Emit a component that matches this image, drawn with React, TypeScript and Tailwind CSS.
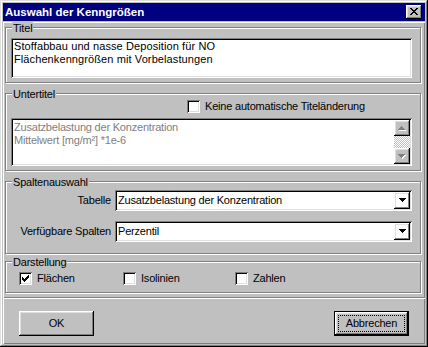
import React from 'react';

const raised = 'shadow-[inset_-1px_-1px_#000,inset_1px_1px_#fff,inset_-2px_-2px_#808080,inset_2px_2px_#dfdfdf]';
const sunken = 'shadow-[inset_1px_1px_#808080,inset_-1px_-1px_#fff,inset_2px_2px_#000,inset_-2px_-2px_#dfdfdf]';
const panel = 'shadow-[inset_1px_1px_#fff,inset_-1px_-1px_#808080]';

function GroupBox({ label, className = '', children }: { label: string; className?: string; children?: React.ReactNode }) {
  return (
    <div className={`relative w-[416px] border border-[#808080] shadow-[inset_1px_1px_#fff,1px_1px_#fff] ${className}`}>
      <span className="absolute left-[6px] -top-[6px] bg-[#c0c0c0] px-px leading-[13px]">{label}</span>
      {children}
    </div>
  );
}

function Check({ checked = false }: { checked?: boolean }) {
  return (
    <span className={`flex h-[13px] w-[13px] shrink-0 items-start bg-white pl-[3px] pt-[3px] ${sunken}`}>
      {checked && (
        <svg width="7" height="7" viewBox="0 0 7 7" shapeRendering="crispEdges">
          <path
            fill="#000"
            d="M6 0h1v1h-1z M5 1h2v1h-2z M0 2h1v1h-1z M4 2h3v1h-3z M0 3h2v1h-2z M3 3h3v1h-3z M0 4h5v1h-5z M1 5h3v1h-3z M2 6h1v1h-1z"
          />
        </svg>
      )}
    </span>
  );
}

function Arrow({ up = false, disabled = false }: { up?: boolean; disabled?: boolean }) {
  const d = up
    ? 'M3 0h1v1h-1z M2 1h3v1h-3z M1 2h5v1h-5z M0 3h7v1h-7z'
    : 'M0 0h7v1h-7z M1 1h5v1h-5z M2 2h3v1h-3z M3 3h1v1h-1z';
  return (
    <svg width="8" height="5" viewBox="0 0 8 5" shapeRendering="crispEdges">
      {disabled && <path fill="#fff" transform="translate(1 1)" d={d} />}
      <path fill={disabled ? '#808080' : '#000'} d={d} />
    </svg>
  );
}

function Combo({ label, value }: { label: string; value: string }) {
  return (
    <div className="flex items-center">
      <span className="w-[106px] pr-px text-right">{label}</span>
      <div className={`ml-[3px] flex h-[21px] w-[297px] items-center bg-white p-[2px] ${sunken}`}>
        <span className="flex-1 pl-px">{value}</span>
        <span className={`flex h-[17px] w-[16px] items-center justify-center pl-px ${raised}`}>
          <Arrow />
        </span>
      </div>
    </div>
  );
}

export default function App() {
  return (
    <div className="h-[347px] w-[428px] bg-[#c0c0c0] font-['Liberation_Sans',Arial,sans-serif] text-[11px] leading-[13px] tracking-[-0.2px] text-black">
      <div className="flex h-full flex-col p-[3px] shadow-[inset_-1px_-1px_#000,inset_1px_1px_#dfdfdf,inset_-2px_-2px_#808080,inset_2px_2px_#fff]">
        <div className="flex h-[18px] items-center justify-between bg-[#000080] pl-[2px] pr-[3px]">
          <span className="text-[11.5px] font-bold leading-[18px] tracking-normal text-white">Auswahl der Kenngrößen</span>
          <span className={`flex h-[14px] w-[16px] items-center justify-center bg-[#c0c0c0] pb-px ${raised}`}>
            <svg width="8" height="7" viewBox="0 0 8 7" shapeRendering="crispEdges">
              <path
                fill="#000"
                d="M0 0h2v1h-2z M6 0h2v1h-2z M1 1h2v1h-2z M5 1h2v1h-2z M2 2h4v1h-4z M3 3h2v1h-2z M2 4h4v1h-4z M1 5h2v1h-2z M5 5h2v1h-2z M0 6h2v1h-2z M6 6h2v1h-2z"
              />
            </svg>
          </span>
        </div>

        <div className={`mt-px flex h-[276px] flex-col pl-[2px] pt-[5px] ${panel}`}>
          <GroupBox label="Titel" className="h-[56px]">
            <div className={`ml-[5px] mt-[10px] h-[40px] w-[401px] bg-white pl-[3px] pt-[2px] tracking-[0.1px] ${sunken}`}>
              <div>Stoffabbau und nasse Deposition für NO</div>
              <div>Flächenkenngrößen mit Vorbelastungen</div>
            </div>
          </GroupBox>

          <GroupBox label="Untertitel" className="mt-[10px] h-[78px]">
            <div className="ml-[181px] mt-[6px] flex items-center gap-[5px]">
              <Check />
              <span>Keine automatische Titeländerung</span>
            </div>
            <div className={`ml-[5px] mt-[5px] flex h-[48px] w-[401px] bg-white p-[2px] ${sunken}`}>
              <div className="flex-1 pl-px pt-px text-[#808080]">
                <div>Zusatzbelastung der Konzentration</div>
                <div>Mittelwert [mg/m²] *1e-6</div>
              </div>
              <div className="flex w-[16px] flex-col">
                <span className={`flex h-[16px] items-center justify-center bg-[#c0c0c0] ${raised}`}>
                  <Arrow up disabled />
                </span>
                <span className="flex-1 bg-[repeating-conic-gradient(#c0c0c0_0_25%,#fff_0_50%)] bg-[length:2px_2px]" />
                <span className={`flex h-[16px] items-center justify-center bg-[#c0c0c0] ${raised}`}>
                  <Arrow disabled />
                </span>
              </div>
            </div>
          </GroupBox>

          <GroupBox label="Spaltenauswahl" className="mt-[10px] h-[73px]">
            <div className="mt-[8px] flex flex-col gap-[10px]">
              <Combo label="Tabelle" value="Zusatzbelastung der Konzentration" />
              <Combo label="Verfügbare Spalten" value="Perzentil" />
            </div>
          </GroupBox>

          <GroupBox label="Darstellung" className="mt-[7px] h-[32px]">
            <div className="ml-[13px] mt-[10px] flex items-center">
              <label className="flex w-[104px] items-center gap-[5px]">
                <Check checked />
                <span>Flächen</span>
              </label>
              <label className="flex w-[112px] items-center gap-[5px]">
                <Check />
                <span>Isolinien</span>
              </label>
              <label className="flex items-center gap-[5px]">
                <Check />
                <span>Zahlen</span>
              </label>
            </div>
          </GroupBox>
        </div>

        <div className={`flex h-[46px] items-start justify-between px-[16px] pt-[13px] ${panel}`}>
          <button type="button" className={`flex h-[25px] w-[75px] items-center justify-center bg-[#c0c0c0] ${raised}`}>
            OK
          </button>
          <button
            type="button"
            className="flex h-[25px] w-[75px] border border-black bg-[#c0c0c0] shadow-[inset_-1px_-1px_#000,inset_1px_1px_#fff,inset_-2px_-2px_#808080,inset_2px_2px_#dfdfdf] p-[3px]"
          >
            <span className="flex flex-1 items-center justify-center border border-dotted border-black">Abbrechen</span>
          </button>
        </div>
      </div>
    </div>
  );
}
